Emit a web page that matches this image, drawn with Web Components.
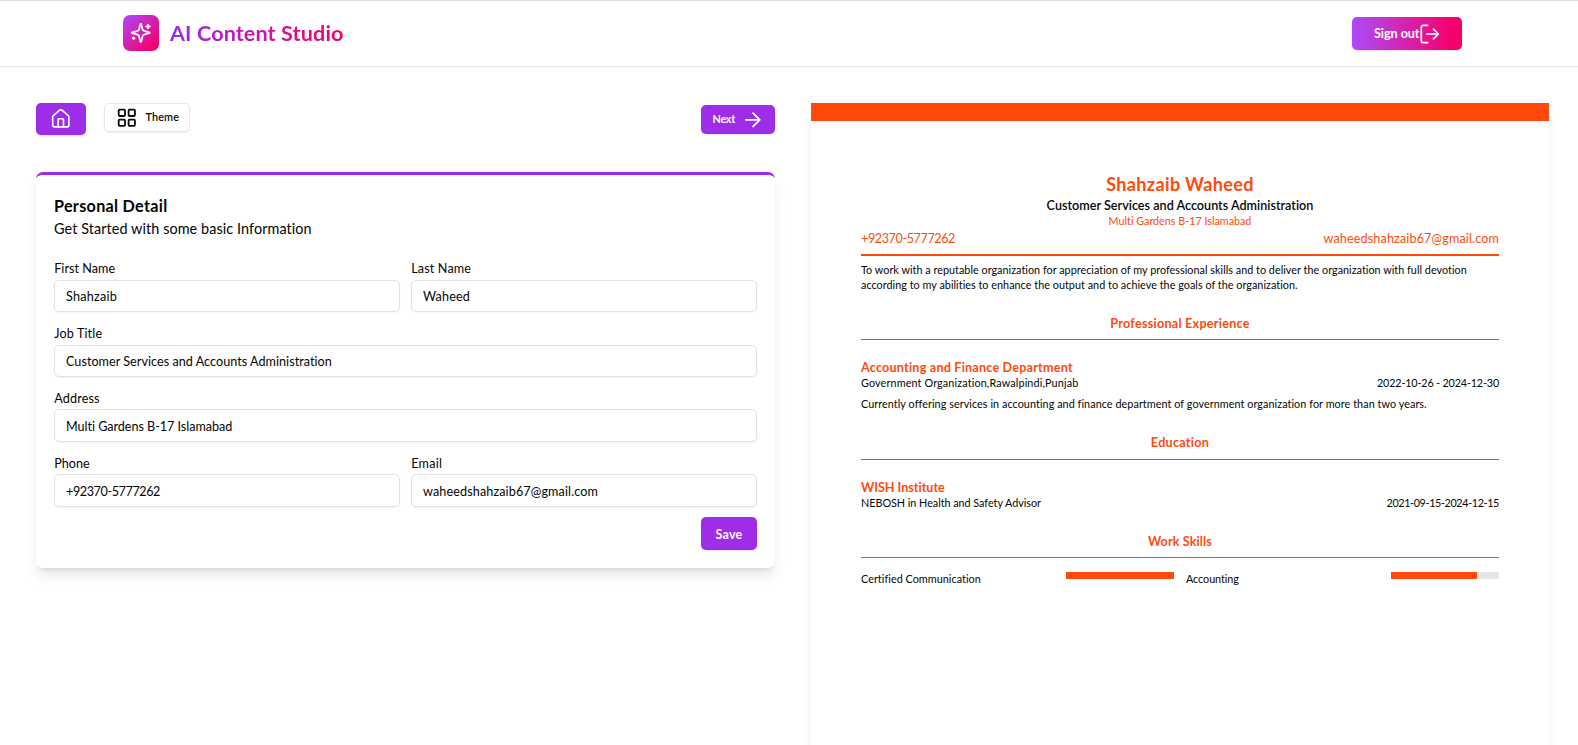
<!DOCTYPE html>
<html lang="en">
<head>
<meta charset="utf-8">
<title>AI Content Studio</title>
<style>
html,body{margin:0;height:100%}
body{font-family:Lato,"Open Sans",sans-serif;color:#050505;background:#fff;overflow:hidden}
</style>
</head>
<body>
<studio-app></studio-app>
<script>
const define = (name, html, Base = HTMLElement, after) => {
  const t = document.createElement('template');
  t.innerHTML = html;
  customElements.define(name, class extends Base {
    connectedCallback() {
      if (this.shadowRoot) return;
      this.attachShadow({mode: 'open'}).append(t.content.cloneNode(true));
      if (after) after(this, this.shadowRoot);
    }
  });
};

// One line of text tracked so that it spans the width given in "w".
// --dy nudges the baseline without changing the height of the line.
define('fit-text', `<style>:host{display:inline-block;white-space:nowrap;vertical-align:top;margin-top:var(--dy,0px);margin-bottom:calc(-1*var(--dy,0px))}</style><slot></slot>`,
  HTMLElement, el => {
    const w = +el.getAttribute('w');
    el.style.letterSpacing = '0px';
    const natural = el.getBoundingClientRect().width;
    const ls = (w - natural) / el.textContent.length;
    el.style.letterSpacing = ls + 'px';
  });

define('studio-header', `<style>
:host{display:flex;box-sizing:border-box;height:67px;border-top:1px solid #e0e0e0;border-bottom:1px solid #e4e4f0;justify-content:space-between;align-items:center;padding:0 116px 0 123px;background:#fff}
.brand{display:flex;align-items:center;gap:11px;margin-bottom:2px}
.logo{width:36px;height:36px;border-radius:7px;background:linear-gradient(135deg,#ad46ff,#f6006c 88%);display:flex;align-items:center;justify-content:center}
.name{font-size:21.6px;line-height:30px;font-weight:700;background:linear-gradient(90deg,#982be9,#f8006a);-webkit-background-clip:text;background-clip:text;color:transparent}
.out{box-sizing:border-box;width:110px;height:33px;border-radius:5px;background:linear-gradient(90deg,#ad4bf8,#f6006c 92%);display:flex;align-items:center;padding-left:22px;color:#fff;font-size:12.6px;line-height:20px;font-weight:700;box-shadow:0 1px 2px #0002}
svg{display:block;fill:none;stroke:#fff;stroke-linecap:round;stroke-linejoin:round}
</style>
<div class="brand"><div class="logo"><svg width="21.6" height="21.6" viewBox="0 0 24 24" stroke-width="2"><path d="M9.937 15.5A2 2 0 0 0 8.5 14.063l-6.135-1.582a.5.5 0 0 1 0-.962L8.5 9.936A2 2 0 0 0 9.937 8.5l1.582-6.135a.5.5 0 0 1 .963 0L14.063 8.5A2 2 0 0 0 15.5 9.937l6.135 1.581a.5.5 0 0 1 0 .964L15.5 14.063a2 2 0 0 0-1.437 1.437l-1.582 6.135a.5.5 0 0 1-.963 0z"/><path d="M20 3v4M22 5h-4M4 17v2M5 18H3"/></svg></div>
<fit-text class="name" w="173.5">AI Content Studio</fit-text></div>
<div class="out"><fit-text w="45.5">Sign out</fit-text><svg width="20" height="20" viewBox="0 0 20 20" stroke-width="1.7"><path d="M7.6 1.3H3.3a2 2 0 0 0-2 2v13.4a2 2 0 0 0 2 2h4.3M6.8 10h11.4M13.5 5.2l4.8 4.8-4.8 4.8"/></svg></div>`);

define('tool-bar', `<style>
:host{display:flex;height:32px;align-items:flex-start;font-size:10.8px;line-height:16px;--dy:-1px}
.b{box-sizing:border-box;display:flex;align-items:center;border-radius:5px;box-shadow:0 1px 2px #0002}
.home{width:50px;height:32px;background:#9f2de8;justify-content:center}
.theme{width:86px;height:29px;border:1px solid #e5e5e5;margin-left:18px;padding-left:11px;gap:8px;color:#0a0a0a;font-weight:600;box-shadow:0 1px 2px #00000012}
.next{width:74px;height:29px;background:#9f2de8;color:#fff;margin:2px 0 0 auto;padding-left:11.5px;gap:7px;font-weight:700}
svg{display:block;fill:none;stroke:currentColor;stroke-linecap:round;stroke-linejoin:round}
.home svg{color:#fff}
</style>
<div class="b home"><svg width="21.6" height="21.6" viewBox="0 0 24 24" stroke-width="1.8"><path d="M15 21v-8a1 1 0 0 0-1-1h-4a1 1 0 0 0-1 1v8"/><path d="M3 10a2 2 0 0 1 .709-1.528l7-5.999a2 2 0 0 1 2.582 0l7 5.999A2 2 0 0 1 21 10v9a2 2 0 0 1-2 2H5a2 2 0 0 1-2-2z"/></svg></div>
<div class="b theme"><svg width="21.6" height="21.6" viewBox="0 0 24 24" stroke-width="2"><rect x="3" y="3" width="7" height="7" rx="1"/><rect x="14" y="3" width="7" height="7" rx="1"/><rect x="14" y="14" width="7" height="7" rx="1"/><rect x="3" y="14" width="7" height="7" rx="1"/></svg><fit-text w="33.5">Theme</fit-text></div>
<div class="b next"><fit-text w="22.5">Next</fit-text><svg width="21.6" height="21.6" viewBox="0 0 24 24" stroke-width="2"><path d="M4.2 12h15.6M12.3 4.6l7.5 7.4-7.5 7.4"/></svg></div>`);

// Labelled input: label, value, their widths, and "tall" for the 33px box.
define('form-field', `<style>
:host{display:flex;flex-direction:column;justify-content:space-between;height:53px;font-size:12.6px;--dy:1px}
.l{line-height:18px;height:18px;padding-left:.2px}
.i{box-sizing:border-box;height:32px;line-height:30px;border:1px solid #e2e2e2;border-radius:5px;padding-left:11px;box-shadow:0 1px 2px #0000000d}
:host([tall]) .i{height:33px;line-height:31px}
</style><div class="l"></div><div class="i"></div>`, HTMLElement, (el, root) => {
  const put = (sel, text, w) => {
    const f = document.createElement('fit-text');
    f.textContent = text; f.setAttribute('w', w);
    root.querySelector(sel).append(f);
  };
  put('.l', el.getAttribute('label'), el.getAttribute('lw'));
  put('.i', el.getAttribute('value'), el.getAttribute('vw'));
});

define('detail-card', `<style>
:host{display:block;box-sizing:border-box;height:396px;border-top:3px solid #9f2de8;border-radius:7px;padding:19px 18px 18px;background:#fff;box-shadow:0 9px 13.5px -2.7px #0000001a,0 3.6px 5.4px -3.6px #0000001a;--dy:1px}
h2{margin:0;font-size:16.2px;line-height:22px;font-weight:700}
p{margin:1px 0 20px;font-size:14.4px;line-height:22px}
.g{display:grid;grid-template-columns:1fr 1fr;gap:12px 11px}
.full{grid-column:1/3}
.save{width:56px;height:33px;margin:10px 0 0 auto;border-radius:5px;background:#9f2de8;color:#fff;display:flex;align-items:center;justify-content:center;font-size:12.6px;line-height:20px;font-weight:700;box-shadow:0 1px 2px #0002}
</style>
<h2><fit-text w="113.5">Personal Detail</fit-text></h2>
<p><fit-text w="258">Get Started with some basic Information</fit-text></p>
<div class="g">
<form-field label="First Name" lw="61" value="Shahzaib" vw="51"></form-field>
<form-field label="Last Name" lw="60" value="Waheed" vw="47"></form-field>
<form-field class="full" label="Job Title" lw="48" value="Customer Services and Accounts Administration" vw="266"></form-field>
<form-field class="full" tall label="Address" lw="45.5" value="Multi Gardens B-17 Islamabad" vw="166.5"></form-field>
<form-field tall label="Phone" lw="35.5" value="+92370-5777262" vw="94"></form-field>
<form-field tall label="Email" lw="31" value="waheedshahzaib67@gmail.com" vw="175"></form-field>
</div>
<div class="save"><fit-text w="27">Save</fit-text></div>`);

define('section-title', `<style>
:host{display:block;margin-top:21.5px;text-align:center;color:#ff4a0c;font-size:12.6px;line-height:18px;font-weight:700;border-bottom:1px solid #ff4a0c;padding-bottom:var(--pb,7px);--dy:1px}
</style><slot></slot>`);

define('skill-row', `<style>
:host{display:flex;justify-content:space-between;font-size:10.8px;line-height:15px;--dy:-1px}
.bar{width:108px;height:7px;margin-top:.5px;background:#e2e6ea}
.bar div{height:100%;background:#ff4a0c}
</style><slot></slot><div class="bar"><div></div></div>`, HTMLElement, (el, root) => {
  root.querySelector('.bar div').style.width = el.getAttribute('level') + '%';
});

define('resume-preview', `<style>
:host{display:block;box-sizing:border-box;height:900px;border-top:18px solid #ff4a0c;padding:50px 50px 0;background:#fff;box-shadow:0 9px 13.5px -2.7px #0000001a,0 3.6px 5.4px -3.6px #0000001a;font-size:10.8px;line-height:15px;--dy:-1px}
.c{text-align:center}.o{color:#ff4a0c}
.name{font-size:18px;line-height:24px;font-weight:700;--dy:1px}
.job{font-size:12.6px;line-height:18px;font-weight:600;margin-top:1px;--dy:1px}
.addr{line-height:14px;--dy:0px}
.row{display:flex;justify-content:space-between}
.contact{font-size:12.6px;line-height:18px;margin-top:1px;padding-bottom:7px;border-bottom:2px solid #ff4a0c;--dy:1px}
.sum{margin-top:6.5px}
h3{margin:18.5px 0 0;font-size:12.6px;line-height:17px;font-weight:700;color:#ff4a0c;--dy:.6px}
.desc{margin-top:6px}
.skills{display:grid;grid-template-columns:313px 313px;gap:12px;margin-top:13.5px}
</style>
<div class="c o name"><fit-text w="147.5">Shahzaib Waheed</fit-text></div>
<div class="c job"><fit-text w="267">Customer Services and Accounts Administration</fit-text></div>
<div class="c o addr"><fit-text w="143">Multi Gardens B-17 Islamabad</fit-text></div>
<div class="row o contact"><fit-text w="94">+92370-5777262</fit-text><fit-text w="175.5">waheedshahzaib67@gmail.com</fit-text></div>
<div class="sum"><fit-text w="606.5">To work with a reputable organization for appreciation of my professional skills and to deliver the organization with full devotion</fit-text><br><fit-text w="437">according to my abilities to enhance the output and to achieve the goals of the organization.</fit-text></div>
<section-title><fit-text w="139.5">Professional Experience</fit-text></section-title>
<h3><fit-text w="212">Accounting and Finance Department</fit-text></h3>
<div class="row"><fit-text w="217.5">Government Organization,Rawalpindi,Punjab</fit-text><fit-text w="122">2022-10-26 - 2024-12-30</fit-text></div>
<div class="desc"><fit-text w="565.5">Currently offering services in accounting and finance department of government organization for more than two years.</fit-text></div>
<section-title style="--pb:8px"><fit-text w="58.5">Education</fit-text></section-title>
<h3><fit-text w="84">WISH Institute</fit-text></h3>
<div class="row"><fit-text w="180">NEBOSH in Health and Safety Advisor</fit-text><fit-text w="112.5">2021-09-15-2024-12-15</fit-text></div>
<section-title><fit-text w="64">Work Skills</fit-text></section-title>
<div class="skills"><skill-row level="100"><fit-text w="120">Certified Communication</fit-text></skill-row><skill-row level="80"><fit-text w="53">Accounting</fit-text></skill-row></div>`);

define('studio-app', `<style>
:host{display:block;height:745px;overflow:hidden}
main{display:grid;grid-template-columns:739px 738px;gap:36px;padding:36px 29px 0 36px;align-items:start}
detail-card{margin-top:37px}
</style>
<studio-header></studio-header>
<main><div><tool-bar></tool-bar><detail-card></detail-card></div><resume-preview></resume-preview></main>`);
</script>
</body>
</html>
